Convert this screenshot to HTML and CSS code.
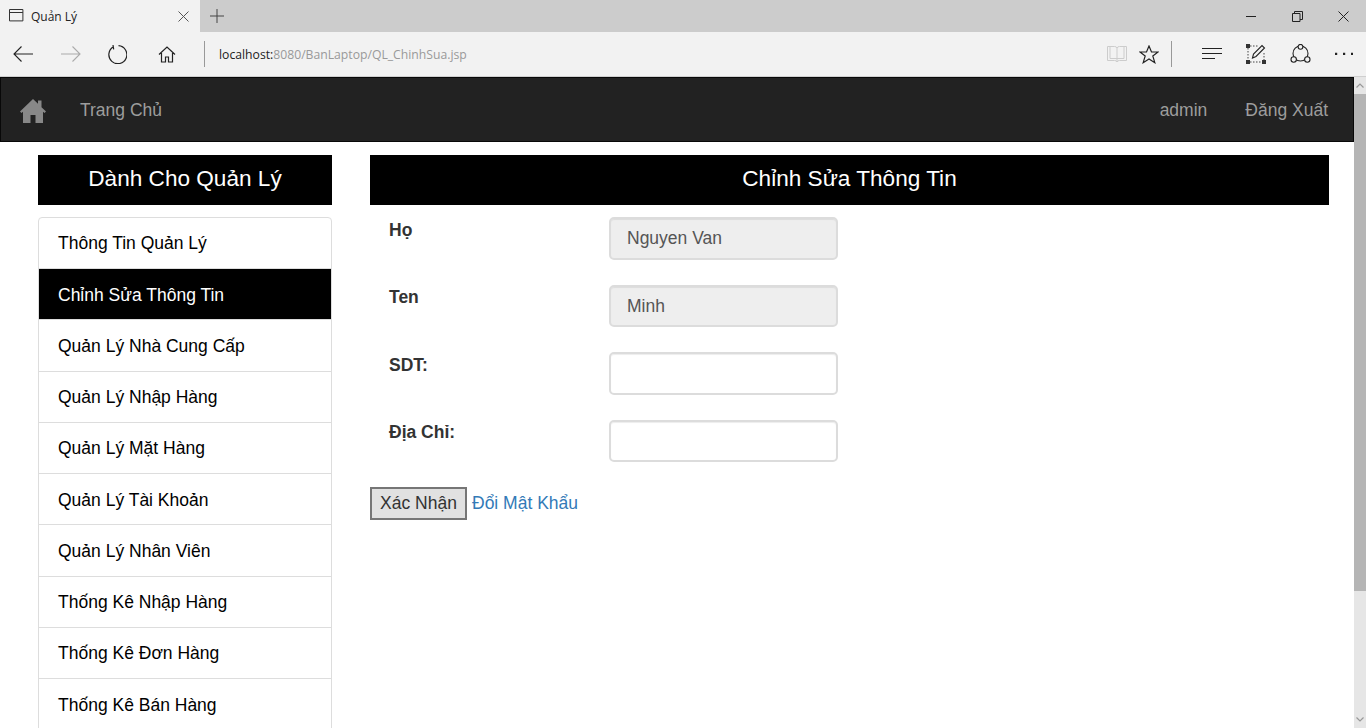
FILE: index.html
```html
<!DOCTYPE html>
<html lang="vi">
<head>
<meta charset="utf-8">
<title>Quản Lý</title>
<link rel="stylesheet" href="styles.css">
</head>
<body>
<div class="tabbar">
  <div class="tab">
    <svg class="tab-icon" width="15" height="13" viewBox="0 0 15 13"><path d="M.5.5h13.4v11.4H.5zM.5 3.5h13.4" fill="none" stroke="#333"/></svg>
    <span class="tab-title">Quản Lý</span>
    <svg class="tab-close" width="11" height="11" viewBox="0 0 11 11"><path d="M.5.5l10 10M10.500.5l-10 10" stroke="#555" fill="none"/></svg>
  </div>
  <svg class="new-tab" width="14" height="14" viewBox="0 0 14 14"><path d="M7 0v14M0 7h14" stroke="#444" fill="none"/></svg>
  <div class="win-controls">
    <svg width="11" height="11" viewBox="0 0 11 11"><path d="M0 5.500h10" stroke="#222" fill="none"/></svg>
    <svg width="11" height="11" viewBox="0 0 11 11"><path d="M.5 2.500h7.500v8H.5zM2.500 2.500V.5h8v8H8" stroke="#222" fill="none"/></svg>
    <svg width="11" height="11" viewBox="0 0 11 11"><path d="M.5.5l10 10M10.500.5l-10 10" stroke="#222" fill="none"/></svg>
  </div>
</div>
<div class="toolbar">
  <div class="nav-buttons">
    <svg width="20" height="16" viewBox="0 0 20 16"><path d="M20 8H1M8.500.5L1 8l7.500 7.500" stroke="#222" stroke-width="1.100" fill="none"/></svg>
    <svg width="20" height="16" viewBox="0 0 20 16"><path d="M0 8h19M11.500.5L19 8l-7.500 7.500" stroke="#aaa" stroke-width="1.100" fill="none"/></svg>
    <svg width="20" height="20" viewBox="0 0 20 20"><path d="M6.500 2.800A9 9 0 1 0 11.500 1.700M6 1l.7 4.300" stroke="#222" stroke-width="1.200" fill="none"/></svg>
    <svg width="18" height="17" viewBox="0 0 18 17"><path d="M1 8.500L9 1l8 7.500M3.500 7v9h4v-5h3v5h4V7" stroke="#222" stroke-width="1.200" fill="none"/></svg>
  </div>
  <div class="tool-sep"></div>
  <div class="address"><span class="host">localhost:</span><span class="path">8080/BanLaptop/QL_ChinhSua.jsp</span></div>
  <div class="tools-left">
    <svg width="20" height="18" viewBox="0 0 20 18"><path d="M.5 1.500h7q2 0 2.500 1.500q.5-1.500 2.500-1.500h7v14h-7q-2 0-2.500 1.500q-.5-1.500-2.500-1.500h-7zM10 3v14M3 1.500v12h7M17 1.500v12h-7" stroke="#ccc" fill="none"/></svg>
    <svg width="20" height="19" viewBox="0 0 20 19"><path d="M10 1l2.500 6h6.500l-5.200 4 2 6.700L10 14l-5.800 3.700 2-6.700L1 7h6.500z" stroke="#222" stroke-width="1.200" fill="none"/></svg>
  </div>
  <div class="tool-sep sep-right"></div>
  <div class="tools-right">
    <svg width="20" height="14" viewBox="0 0 20 14"><path d="M0 1.500h20M0 6.500h20M0 11.500h13" stroke="#222" fill="none"/></svg>
    <svg width="20" height="20" viewBox="0 0 20 20"><path d="M2 4v13M4 18h12M4 2h8M18 9v7" stroke="#444" stroke-dasharray="1.500 1.500" fill="none"/><path d="M0 0h4v4H0zM0 16h4v4H0zM16 16h4v4h-4z" fill="#333"/><path d="M6.500 14l1-4L16 1.500l2.500 2.500L10 12.500z" stroke="#222" stroke-width="1.100" fill="none"/></svg>
    <svg width="21" height="20" viewBox="0 0 21 20"><circle cx="10.500" cy="9.500" r="7.500" fill="none" stroke="#222" stroke-width="1.100"/><circle cx="3.700" cy="15.500" r="2.700" fill="#f2f2f2" stroke="#222" stroke-width="1.100"/><circle cx="17.300" cy="15.500" r="2.700" fill="#f2f2f2" stroke="#222" stroke-width="1.100"/><circle cx="10.500" cy="2.800" r="2.400" fill="#f2f2f2" stroke="#222" stroke-width="1.100"/></svg>
    <svg width="18" height="4" viewBox="0 0 18 4"><path d="M0 .8h2.200v2.200H0zM8 .8h2.200v2.200H8zM16 .8h2v2.200h-2z" fill="#222"/></svg>
  </div>
</div>
<div class="viewport">
  <div class="page">
    <nav class="navbar">
      <svg class="nav-home" width="26" height="24" viewBox="0 0 26 24"><path d="M13 0L0 12.500l1.500 1.500L3 12.700V24h7.500v-8h5v8H23V12.700l1.500 1.300 1.500-1.500L21.500 8.200V1.500h-3.500v3.300z" fill="#888"/></svg>
      <a class="nav-link nav-main">Trang Chủ</a>
      <div class="nav-right">
        <a class="nav-link">admin</a>
        <a class="nav-link">Đăng Xuất</a>
      </div>
    </nav>
    <div class="content">
      <aside class="sidebar">
        <h2 class="panel-title">Dành Cho Quản Lý</h2>
        <ul class="menu">
          <li class="menu-item">Thông Tin Quản Lý</li>
          <li class="menu-item active">Chỉnh Sửa Thông Tin</li>
          <li class="menu-item">Quản Lý Nhà Cung Cấp</li>
          <li class="menu-item">Quản Lý Nhập Hàng</li>
          <li class="menu-item">Quản Lý Mặt Hàng</li>
          <li class="menu-item">Quản Lý Tài Khoản</li>
          <li class="menu-item">Quản Lý Nhân Viên</li>
          <li class="menu-item">Thống Kê Nhập Hàng</li>
          <li class="menu-item">Thống Kê Đơn Hàng</li>
          <li class="menu-item">Thống Kê Bán Hàng</li>
        </ul>
      </aside>
      <main class="main">
        <h2 class="panel-title">Chỉnh Sửa Thông Tin</h2>
        <form class="form">
          <div class="row"><label class="label">Họ</label><input class="input" value="Nguyen Van" disabled></div>
          <div class="row"><label class="label">Ten</label><input class="input" value="Minh" disabled></div>
          <div class="row"><label class="label">SDT:</label><input class="input"></div>
          <div class="row"><label class="label">Địa Chỉ:</label><input class="input"></div>
          <div class="actions"><button type="button" class="submit">Xác Nhận</button><a class="change-pass">Đổi Mật Khẩu</a></div>
        </form>
      </main>
    </div>
  </div>
  <div class="scrollbar">
    <div class="scroll-btn"><svg width="8" height="5" viewBox="0 0 8 5"><path d="M.5 4.500L4 1l3.500 3.500" stroke="#999" stroke-width="1.200" fill="none"/></svg></div>
    <div class="scroll-thumb"></div>
    <div class="scroll-track"></div>
    <div class="scroll-btn"><svg width="8" height="5" viewBox="0 0 8 5"><path d="M.5.5L4 4l3.500-3.500" stroke="#999" stroke-width="1.200" fill="none"/></svg></div>
  </div>
</div>
</body>
</html>
```
FILE: styles.css
```css
* { box-sizing: border-box; }
html, body { margin: 0; height: 728px; overflow: hidden; }
body { display: flex; flex-direction: column; font-family: "Liberation Sans", Arial, sans-serif; background: #fff; color: #333; }

.tabbar { height: 32px; flex: none; background: #cccccc; display: flex; align-items: center; }
.tab { width: 200px; height: 32px; background: #f2f2f2; display: flex; align-items: center; padding: 0 11px 0 9px; }
.tab-icon { flex: none; margin-top: -1px; }
.tab-title { flex: 1; margin-left: 7px; font: 12px "Open Sans", sans-serif; color: #222; }
.new-tab { margin-left: 10px; }
.win-controls { margin-left: auto; display: flex; align-items: center; gap: 35px; padding-right: 17px; }

.toolbar { height: 45px; flex: none; background: #f2f2f2; border-bottom: 1px solid #cfcfcf; display: flex; align-items: center; }
.nav-buttons { display: flex; align-items: center; gap: 0; width: 204px; padding-left: 13px; }
.nav-buttons svg:nth-child(1) { margin-right: 28px; }
.nav-buttons svg:nth-child(2) { margin-right: 26px; }
.nav-buttons svg:nth-child(3) { margin-right: 31px; }
.tool-sep { width: 1px; height: 26px; background: #999; flex: none; }
.address { margin-left: 14px; font: 12.200px "Open Sans", sans-serif; flex: 1; }
.host { color: #222; }
.path { color: #999; }
.tools-left { display: flex; align-items: center; gap: 12px; margin-right: 12px; }
.sep-right { margin-right: 30px; }
.tools-right { display: flex; align-items: center; gap: 24px; margin-right: 13px; }

.viewport { flex: 1; display: flex; min-height: 0; }
.page { flex: 1; min-width: 0; overflow: hidden; }

.navbar { height: 65px; background: #222; border: 1px solid #080808; display: flex; align-items: center; padding: 0 25px 0 19px; }
.nav-home { margin-top: 2px; flex: none; }
.nav-link { color: #9d9d9d; font-size: 17.500px; margin-top: 1px; }
.nav-main { margin-left: 34px; }
.nav-right { margin-left: auto; display: flex; gap: 38px; }

.content { display: flex; gap: 38px; padding: 13px 25px 0 38px; }
.sidebar { width: 294px; flex: none; }
.main { flex: 1; min-width: 0; }
.panel-title { margin: 0; height: 50px; background: #000; color: #fff; font-size: 22.600px; font-weight: 400; line-height: 48px; text-align: center; }

.menu { list-style: none; margin: 12px 0 0; padding: 0; }
.menu-item { border: 1px solid #ddd; background: #fff; color: #000; font-size: 17.500px; line-height: 25px; padding: 13.400px 19px 11.850px; margin-bottom: -1px; }
.menu-item:first-child { border-radius: 4px 4px 0 0; }
.menu-item.active { background: #000; color: #fff; }

.form { padding-top: 12px; }
.row { display: flex; align-items: flex-start; height: 67.500px; padding-left: 19px; }
.label { width: 220px; font-size: 17.500px; font-weight: 700; line-height: 25px; padding-top: .8px; }
.input { width: 229px; height: 42.500px; border: 2px solid #dcdcdc; border-radius: 5px; padding: .6px 16px 0; font: 17.500px "Liberation Sans", Arial, sans-serif; color: #555; background: #fff; box-shadow: inset 0 1px 1px rgba(0,0,0,.075); }
.input:disabled { background: #eee; color: #555; opacity: 1; }
.actions { display: flex; align-items: center; margin-top: 0; }
.submit { width: 97px; height: 33px; padding: 0; border: 2px solid #767676; background: #e1e1e1; color: #333; font: 17.500px "Liberation Sans", Arial, sans-serif; }
.change-pass { margin-left: 5px; font-size: 17.500px; color: #337ab7; }

.scrollbar { width: 12px; flex: none; display: flex; flex-direction: column; background: #e6e6e6; }
.scroll-btn { height: 17px; flex: none; display: flex; align-items: center; justify-content: center; }
.scroll-thumb { height: 497px; flex: none; background: #b5b5b5; }
.scroll-track { flex: 1; }
```
